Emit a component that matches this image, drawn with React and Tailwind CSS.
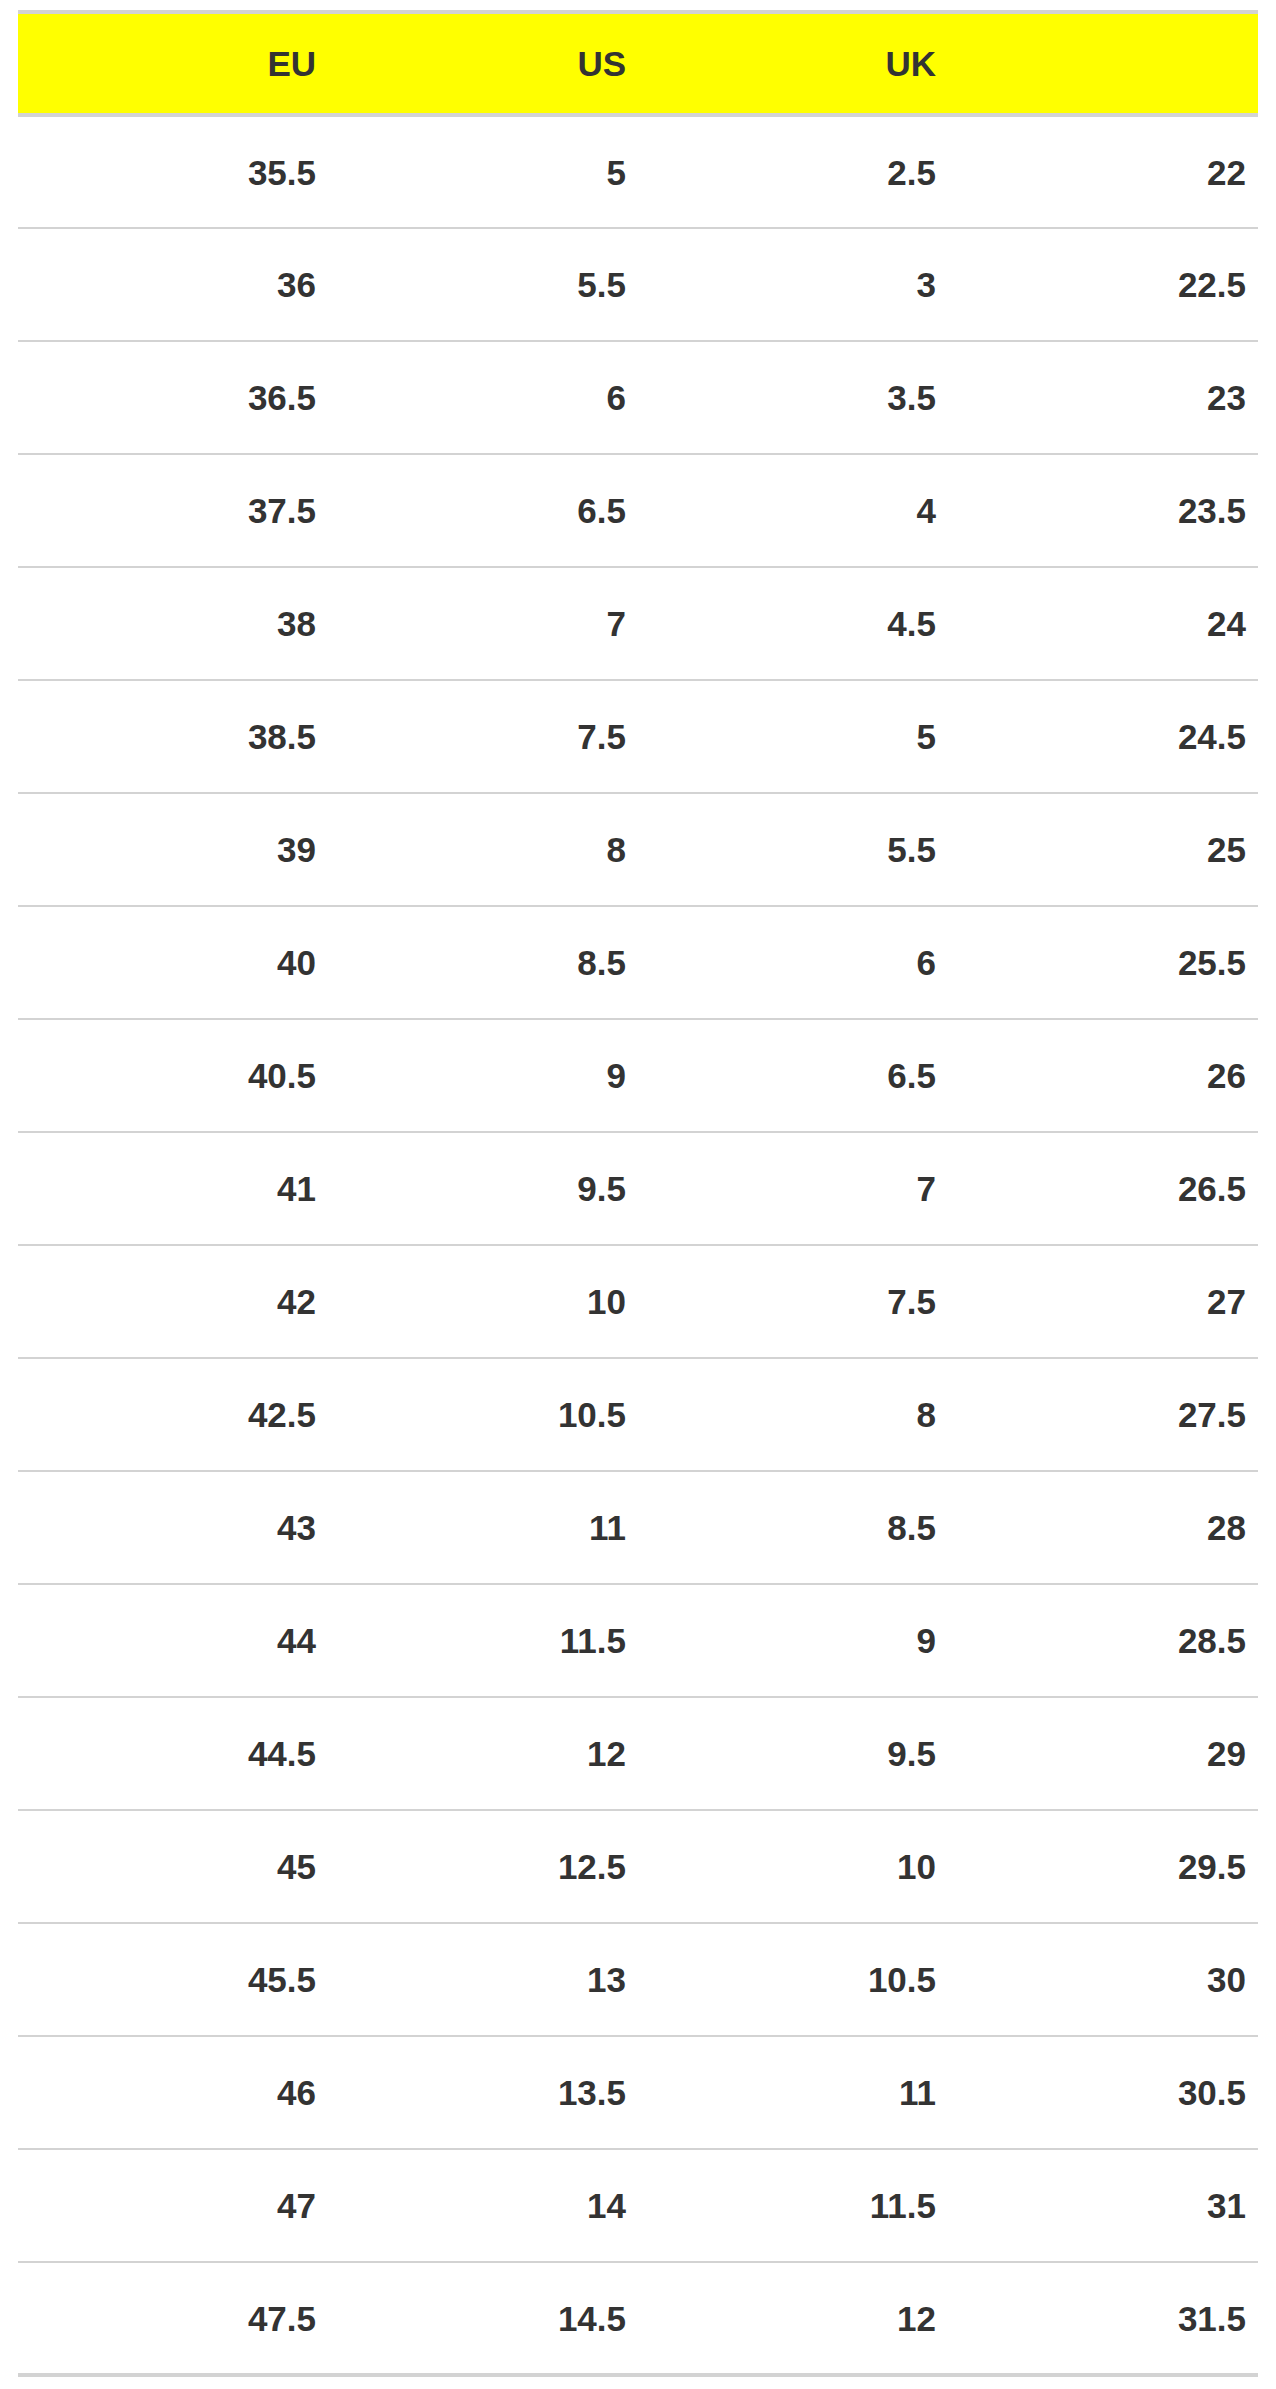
import React from "react";

const rows = [
  ["35.5", "5", "2.5", "22"],
  ["36", "5.5", "3", "22.5"],
  ["36.5", "6", "3.5", "23"],
  ["37.5", "6.5", "4", "23.5"],
  ["38", "7", "4.5", "24"],
  ["38.5", "7.5", "5", "24.5"],
  ["39", "8", "5.5", "25"],
  ["40", "8.5", "6", "25.5"],
  ["40.5", "9", "6.5", "26"],
  ["41", "9.5", "7", "26.5"],
  ["42", "10", "7.5", "27"],
  ["42.5", "10.5", "8", "27.5"],
  ["43", "11", "8.5", "28"],
  ["44", "11.5", "9", "28.5"],
  ["44.5", "12", "9.5", "29"],
  ["45", "12.5", "10", "29.5"],
  ["45.5", "13", "10.5", "30"],
  ["46", "13.5", "11", "30.5"],
  ["47", "14", "11.5", "31"],
  ["47.5", "14.5", "12", "31.5"],
];

function App() {
  return (
    <div className="bg-white min-h-screen pt-[10px] px-[18px] font-['Liberation_Sans',Arial,sans-serif] text-[#333333]">
      <table className="w-full border-collapse table-fixed">
        <thead>
          <tr className="bg-[#ffff00] border-t-4 border-b-4 border-[#d3d3d3]">
            {["EU", "US", "UK", ""].map((h, i) => (
              <th
                key={i}
                className="h-[103px] pr-[12px] text-right text-[35px] font-bold leading-none"
              >
                {h}
              </th>
            ))}
          </tr>
        </thead>
        <tbody>
          {rows.map((r, i) => (
            <tr
              key={i}
              className={
                i === rows.length - 1
                  ? "border-b-4 border-[#d3d3d3]"
                  : "border-b-2 border-[#d3d3d3]"
              }
            >
              {r.map((c, j) => (
                <td
                  key={j}
                  className="h-[113px] pr-[12px] text-right text-[35px] font-bold leading-none"
                >
                  {c}
                </td>
              ))}
            </tr>
          ))}
        </tbody>
      </table>
    </div>
  );
}

export default App;
